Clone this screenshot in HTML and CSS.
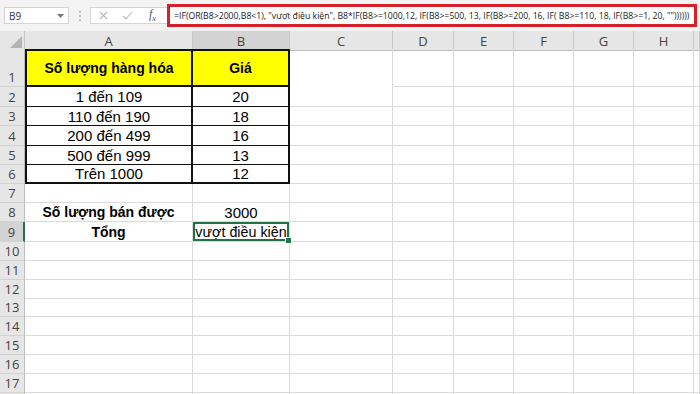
FILE: index.html
```html
<!DOCTYPE html>
<html lang="vi">
<head>
<meta charset="utf-8">
<title>Excel</title>
<link rel="stylesheet" href="styles.css">
</head>
<body>
<div class="toolbar">
  <div class="namebox"><span>B9</span><svg class="caret" width="7" height="4" viewBox="0 0 7 4"><path d="M0 0h7L3.5 4z" fill="#7a7a7a"/></svg></div>
  <div class="sep"><i></i><i></i><i></i></div>
  <div class="fxbox">
    <svg class="ico" width="9" height="9" viewBox="0 0 9 9"><path d="M1 1l7 7M8 1L1 8" stroke="#b9b9b9" stroke-width="1.1" fill="none"/></svg>
    <svg class="ico" width="11" height="9" viewBox="0 0 11 9"><path d="M1 5l3 3 6-7" stroke="#b9b9b9" stroke-width="1.1" fill="none"/></svg>
    <span class="fx">f<sub>x</sub></span>
  </div>
  <div class="formula">=IF(OR(B8&gt;2000,B8&lt;1), "vượt điều kiện", B8*IF(B8&gt;=1000,12, IF(B8&gt;=500, 13, IF(B8&gt;=200, 16, IF( B8&gt;=110, 18, IF(B8&gt;=1, 20, ""))))))</div>
</div>
<div class="sheet">
  <div class="row hdr"><div class="corner"><svg width="12" height="12" viewBox="0 0 12 12"><path d="M12 0v12H0z" fill="#b4b4b4"/></svg></div><div>A</div><div class="selc">B</div><div>C</div><div>D</div><div>E</div><div>F</div><div>G</div><div>H</div><div></div></div>
  <div class="row r1"><div class="rh">1</div><div class="ta y b top hb">Số lượng hàng hóa</div><div class="tb y b top hb">Giá</div><div class="nob"></div><i></i><i></i><i></i><i></i><i></i><i></i></div>
  <div class="row h20"><div class="rh">2</div><div class="ta">1 đến 109</div><div class="tb">20</div><i></i><i></i><i></i><i></i><i></i><i></i><i></i></div>
  <div class="row h19"><div class="rh">3</div><div class="ta">110 đến 190</div><div class="tb">18</div><i></i><i></i><i></i><i></i><i></i><i></i><i></i></div>
  <div class="row h20"><div class="rh">4</div><div class="ta">200 đến 499</div><div class="tb">16</div><i></i><i></i><i></i><i></i><i></i><i></i><i></i></div>
  <div class="row h19"><div class="rh">5</div><div class="ta">500 đến 999</div><div class="tb">13</div><i></i><i></i><i></i><i></i><i></i><i></i><i></i></div>
  <div class="row h19"><div class="rh">6</div><div class="ta hb">Trên 1000</div><div class="tb hb">12</div><i></i><i></i><i></i><i></i><i></i><i></i><i></i></div>
  <div class="row h19"><div class="rh">7</div><i></i><i></i><i></i><i></i><i></i><i></i><i></i><i></i><i></i></div>
  <div class="row h19"><div class="rh">8</div><div class="c b">Số lượng bán được</div><div class="c">3000</div><i></i><i></i><i></i><i></i><i></i><i></i><i></i></div>
  <div class="row h20"><div class="rh selr">9</div><div class="c b">Tổng</div><div class="c sel">vượt điều kiện</div><i></i><i></i><i></i><i></i><i></i><i></i><i></i></div>
  <div class="row h19"><div class="rh">10</div><i></i><i></i><i></i><i></i><i></i><i></i><i></i><i></i><i></i></div>
  <div class="row h19"><div class="rh">11</div><i></i><i></i><i></i><i></i><i></i><i></i><i></i><i></i><i></i></div>
  <div class="row h18"><div class="rh">12</div><i></i><i></i><i></i><i></i><i></i><i></i><i></i><i></i><i></i></div>
  <div class="row h19"><div class="rh">13</div><i></i><i></i><i></i><i></i><i></i><i></i><i></i><i></i><i></i></div>
  <div class="row h19"><div class="rh">14</div><i></i><i></i><i></i><i></i><i></i><i></i><i></i><i></i><i></i></div>
  <div class="row h19"><div class="rh">15</div><i></i><i></i><i></i><i></i><i></i><i></i><i></i><i></i><i></i></div>
  <div class="row h19"><div class="rh">16</div><i></i><i></i><i></i><i></i><i></i><i></i><i></i><i></i><i></i></div>
  <div class="row h19"><div class="rh">17</div><i></i><i></i><i></i><i></i><i></i><i></i><i></i><i></i><i></i></div>
  <div class="row h19"><div class="rh"></div><i></i><i></i><i></i><i></i><i></i><i></i><i></i><i></i><i></i></div>
</div>
</body>
</html>
```
FILE: styles.css
```css
* { box-sizing: border-box; }
html, body { margin: 0; padding: 0; }
body {
  width: 700px;
  height: 394px;
  overflow: hidden;
  background: #fff;
  font-family: "Liberation Sans", Arial, sans-serif;
}

.toolbar {
  height: 31px;
  background: #f3f3f3;
  display: flex;
  align-items: center;
  padding-left: 4px;
}
.namebox {
  width: 65px;
  height: 17px;
  background: #fff;
  border: 1px solid #d4d4d4;
  display: flex;
  align-items: center;
  justify-content: space-between;
  padding: 0 4px 0 4px;
  font-family: "Open Sans", sans-serif;
  font-size: 10px;
  color: #333;
}
.sep {
  width: 21px;
  display: flex;
  flex-direction: column;
  align-items: center;
  gap: 2px;
}
.sep i { width: 2px; height: 2px; background: #c4c4c4; display: block; }
.fxbox {
  width: 77px;
  height: 17px;
  background: #fff;
  border: 1px solid #d4d4d4;
  border-right: none;
  display: flex;
  align-items: center;
  padding-left: 8px;
  gap: 14px;
}
.fx {
  font-family: "Liberation Serif", serif;
  font-style: italic;
  font-size: 12px;
  color: #555;
  margin-left: 2px;
}
.fx sub { font-size: 8px; }
.formula {
  flex: 1;
  margin-right: 3px;
  height: 23px;
  background: #fff;
  border: 3px solid #d8202a;
  display: flex;
  align-items: center;
  padding-left: 4px;
  font-family: "Open Sans", sans-serif;
  font-size: 8.7px;
  color: #222;
  white-space: nowrap;
  overflow: hidden;
}

.sheet { display: flex; flex-direction: column; }
.row {
  display: grid;
  grid-template-columns: 25px 168px 97px 103px 61px 60px 60px 60px 60px 6px;
  height: 19px;
}
.row > * {
  border-right: 1px solid #dadada;
  border-bottom: 1px solid #dadada;
  display: flex;
  align-items: center;
  justify-content: center;
  font-size: 15px;
  color: #000;
}
.hdr { height: 18px; }
.hdr > * {
  background: #e6e6e6;
  border-right: 1px solid #c9c9c9;
  border-bottom: 1px solid #bdbdbd;
  font-family: "Open Sans", sans-serif;
  font-size: 13px;
  color: #444;
  padding-top: 1px;
}
.hdr .corner { justify-content: flex-end; align-items: flex-end; padding: 0 2px 2px 0; }
.hdr .selc { background: #d3d3d3; border-bottom: 1px solid #bdbdbd; }
.r1 { height: 38px; }
.h20 { height: 20px; }
.h19 { height: 19px; }
.h18 { height: 18px; }

.rh {
  background: #e6e6e6;
  border-right: 1px solid #bdbdbd !important;
  border-bottom: 1px solid #d2d2d2 !important;
  font-family: "Open Sans", sans-serif;
  font-size: 13px !important;
  color: #444 !important;
  align-items: flex-end !important;
}
.rh.selr { background: #d3d3d3; border-right: 2px solid #217346 !important; }

.row > .ta {
  border-left: 2px solid #111;
  border-right: 2px solid #111;
  border-bottom: 1px solid #111;
}
.row > .tb {
  border-right: 2px solid #111;
  border-bottom: 1px solid #111;
}
.row > .top { border-top: 2px solid #111; }
.row > .hb { border-bottom: 2px solid #111; }
.y { background: #ffff00; }
.row > .b { font-weight: bold; font-size: 14px; }
.row > .nob { border-bottom-color: #fff; }

.row > .sel {
  position: relative;
  box-shadow: inset 0 0 0 2px #217346;
  font-size: 14.3px;
  white-space: nowrap;
}
.sel::after {
  content: "";
  position: absolute;
  right: -3px;
  bottom: -3px;
  width: 5px;
  height: 5px;
  background: #217346;
  border: 1px solid #fff;
}
```
